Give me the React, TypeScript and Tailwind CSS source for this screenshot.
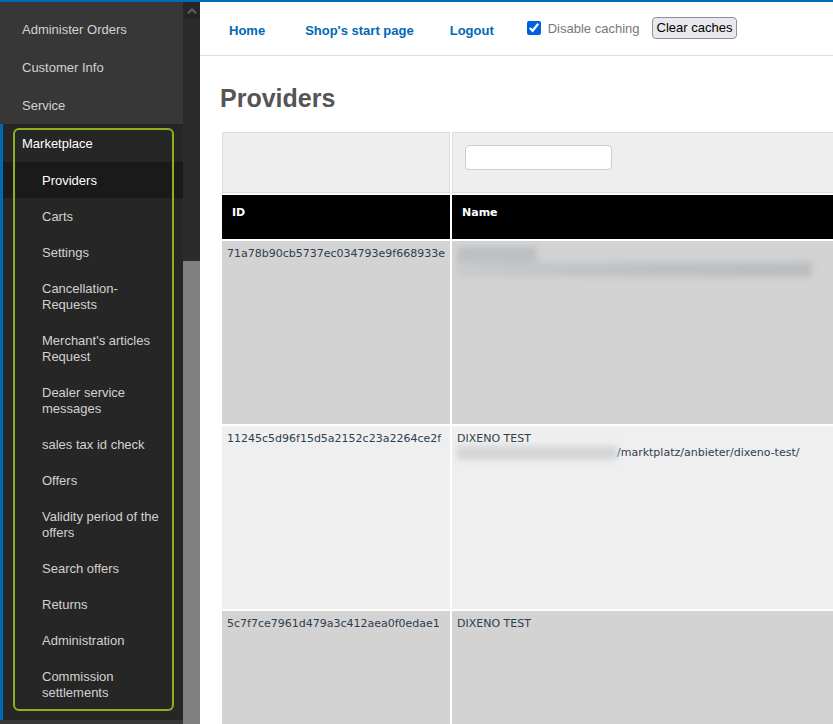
import React from 'react';
import { ChevronUp } from 'lucide-react';

const topItems = ['Administer Orders', 'Customer Info', 'Service'];

const subItems: { label: string; active?: boolean }[] = [
  { label: 'Providers', active: true },
  { label: 'Carts' },
  { label: 'Settings' },
  { label: 'Cancellation-Requests' },
  { label: "Merchant's articles Request" },
  { label: 'Dealer service messages' },
  { label: 'sales tax id check' },
  { label: 'Offers' },
  { label: 'Validity period of the offers' },
  { label: 'Search offers' },
  { label: 'Returns' },
  { label: 'Administration' },
  { label: 'Commission settlements' },
];

const rows = [
  {
    id: '71a78b90cb5737ec034793e9f668933e',
    bg: 'bg-[#d3d3d3]',
    name: (
      <div className="blur-[3px]">
        <div className="h-[15px] w-[80px] bg-[#bcc0c3]" />
        <div className="h-[15px] w-[355px] bg-gradient-to-r from-[#c8cacc] via-[#bec1c4] to-[#babdc0]" />
      </div>
    ),
  },
  {
    id: '11245c5d96f15d5a2152c23a2264ce2f',
    bg: 'bg-[#efefef]',
    name: (
      <>
        <div>DIXENO TEST</div>
        <div className="flex">
          <div className="h-[14px] w-[160px] bg-[#d2d4d6] blur-[3px]" />
          <span>/marktplatz/anbieter/dixeno-test/</span>
        </div>
      </>
    ),
  },
  { id: '5c7f7ce7961d479a3c412aea0f0edae1', bg: 'bg-[#d3d3d3]', name: <div>DIXENO TEST</div> },
];

function Sidebar() {
  return (
    <aside className="flex h-full w-[200px] shrink-0 font-['Liberation_Sans',sans-serif] text-[13px] leading-4">
      <div className="relative flex w-[183px] flex-col bg-[#373737] pt-2">
        <ul>
          {topItems.map((item) => (
            <li key={item} className="pb-[10px] pl-[22px] pt-[12px] text-[#d2d2d2]">
              {item}
            </li>
          ))}
        </ul>
        <div className="border-l-[3px] border-[#0069b4] bg-[#262626] pb-[10px]">
          <div className="pb-[10px] pl-[19px] pt-[12px] text-white">Marketplace</div>
          <ul>
            {subItems.map((item) => (
              <li
                key={item.label}
                className={`pb-[9px] pl-[39px] pr-3 pt-[11px] ${item.active ? 'bg-[#1a1a1a] text-white' : 'text-[#d2d2d2]'}`}
              >
                {item.label}
              </li>
            ))}
          </ul>
        </div>
        {/* highlight drawn over the menu */}
        <div className="absolute left-[13px] top-[126px] h-[583px] w-[161px] rounded-[6px] border-2 border-[#8db01c]" />
      </div>
      <div className="flex w-[17px] flex-col bg-[#2b2b2b]">
        <div className="flex h-[17px] items-center justify-center bg-[#262626] text-[#5f5f5f]">
          <ChevronUp size={14} strokeWidth={3.5} />
        </div>
        <div className="h-[242px]" />
        <div className="flex-1 bg-[#808080]" />
      </div>
    </aside>
  );
}

function TopNav() {
  return (
    <nav className="flex h-[54px] items-center border-b border-[#dddddd] pl-[29px] font-['Liberation_Sans',sans-serif] text-[13px]">
      <a className="mt-[4px] font-bold text-[#0069b4]">Home</a>
      <a className="ml-[40px] mt-[4px] font-bold text-[#0069b4]">Shop's start page</a>
      <a className="ml-[36px] mt-[4px] font-bold text-[#0069b4]">Logout</a>
      <label className="mb-[2px] ml-[33px] flex items-center text-[#777777]">
        <input type="checkbox" defaultChecked className="m-0 h-[14px] w-[14px] accent-[#0060df]" />
        <span className="ml-[7px] mt-[2px]">Disable caching</span>
      </label>
      <button className="mb-[2px] ml-[12px] h-[22px] rounded-[4px] border border-[#8f8f9d] bg-[#e9e9ed] px-[4px] text-[13px] text-black">
        Clear caches
      </button>
    </nav>
  );
}

export default function App() {
  return (
    <div className="h-[724px] w-[833px] overflow-hidden border-t-2 border-[#0069b4] bg-white">
      <div className="flex h-full">
        <Sidebar />
        <main className="min-w-0 flex-1 overflow-hidden">
          <TopNav />
          <h1 className="pl-5 pt-[27px] font-['Liberation_Sans',sans-serif] text-[25px] font-bold leading-[30px] text-[#555555]">
            Providers
          </h1>
          <table className="ml-5 mt-[17px] w-[800px] table-fixed border-separate border-spacing-[2px] font-['DejaVu_Sans',sans-serif] text-[11px] leading-[14px] text-[#2c3e50]">
            <colgroup>
              <col className="w-[228px]" />
              <col />
            </colgroup>
            <thead>
              <tr>
                <td className="h-[61px] border border-[#dddddd] bg-[#eeeeee]" />
                <td className="h-[61px] border border-[#dddddd] bg-[#eeeeee] pl-[12px] pt-[12px] align-top">
                  <input className="block h-[25px] w-[147px] rounded-[4px] border border-[#cccccc] bg-white" />
                </td>
              </tr>
              <tr className="bg-black text-left font-bold text-white">
                <th className="h-[44px] pb-[9px] pl-[10px]">ID</th>
                <th className="h-[44px] pb-[9px] pl-[10px]">Name</th>
              </tr>
            </thead>
            <tbody>
              {rows.map((row) => (
                <tr key={row.id} className={row.bg}>
                  <td className="h-[183px] whitespace-nowrap px-[5px] pt-[6px] align-top">{row.id}</td>
                  <td className="h-[183px] px-[5px] pt-[6px] align-top">{row.name}</td>
                </tr>
              ))}
            </tbody>
          </table>
        </main>
      </div>
    </div>
  );
}
